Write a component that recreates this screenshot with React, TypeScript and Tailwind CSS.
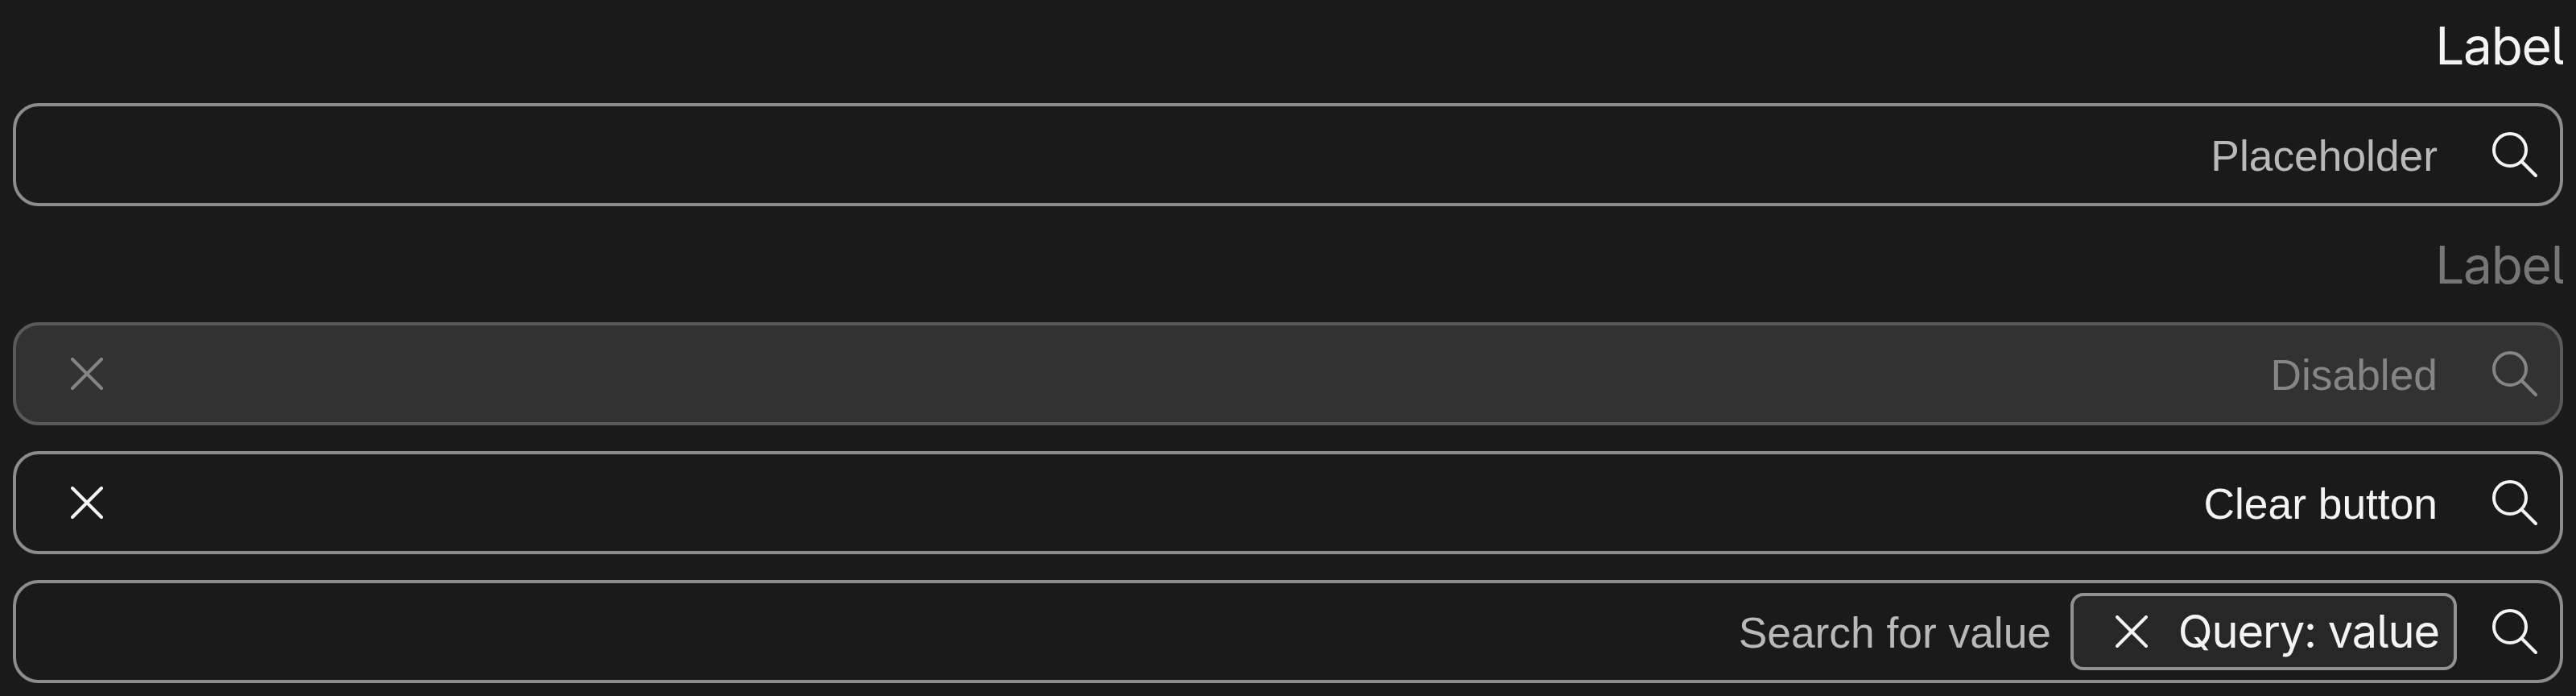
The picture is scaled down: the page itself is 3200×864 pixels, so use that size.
const sans = "font-['Liberation_Sans',sans-serif] text-[53.333px] leading-[61px] whitespace-nowrap";
const inter = "font-['Inter',sans-serif] whitespace-nowrap tracking-[-0.02em] [font-feature-settings:'cv05'_1]";

function SearchIcon() {
  return (
    <svg className="size-16 shrink-0" viewBox="0 0 64 64" fill="none" stroke="currentColor" strokeWidth="4" strokeLinecap="round">
      <circle cx="26" cy="26" r="20" />
      <path d="M41 41L58 58" />
    </svg>
  );
}

function CloseIcon() {
  return (
    <svg className="size-10 shrink-0" viewBox="0 0 40 40" fill="none" stroke="currentColor" strokeWidth="4" strokeLinecap="round">
      <path d="M2 2L38 38M38 2L2 38" />
    </svg>
  );
}

function Label({ className = "" }: { className?: string }) {
  return (
    <div className={`${inter} flex h-28 items-start justify-end overflow-hidden pt-px text-[64px] leading-[80px] ${className}`}>
      <span className="-mr-px">Label</span>
    </div>
  );
}

const box = "flex h-32 items-center rounded-[32px] border-4 pl-[68px] pr-6";

export default function App() {
  return (
    <div className="flex h-[864px] w-[3200px] flex-col bg-[#1a1a1a] p-4 text-[#f4f4f4]">
      <Label />
      <div className={`${box} border-[#8d8d8d]`}>
        <span className={`${sans} ml-auto mr-16 pt-0.5 text-[#b9b9b9]`}>Placeholder</span>
        <SearchIcon />
      </div>
      <Label className="mt-8 text-[#767676]" />
      <div className={`${box} border-[#5a5a5a] bg-[#323232] text-[#858585]`}>
        <CloseIcon />
        <span className={`${sans} ml-auto mr-16 pt-0.5`}>Disabled</span>
        <SearchIcon />
      </div>
      <div className={`${box} mt-8 border-[#8d8d8d]`}>
        <CloseIcon />
        <span className={`${sans} ml-auto mr-16 pt-0.5`}>Clear button</span>
        <SearchIcon />
      </div>
      <div className={`${box} mt-8 border-[#8d8d8d]`}>
        <span className={`${sans} ml-auto mr-6 pt-0.5 text-[#b9b9b9]`}>Search for value</span>
        <div className="mr-10 flex h-24 w-[480px] items-center rounded-2xl border-4 border-[#929292] bg-[#272727] pl-[52px] pr-[18px]">
          <CloseIcon />
          <span className={`${inter} ml-auto text-[56px] leading-[72px]`}>Query: value</span>
        </div>
        <SearchIcon />
      </div>
    </div>
  );
}
